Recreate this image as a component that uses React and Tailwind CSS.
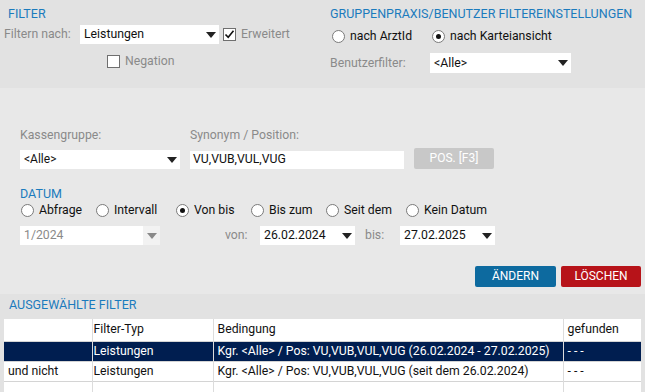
import React from 'react';

const Arrow = ({ muted }) => (
  <svg width="10" height="6" viewBox="0 0 10 6" className="shrink-0">
    <path d="M0 0 L10 0 L5 6 Z" fill={muted ? '#8a8a8a' : '#222'} />
  </svg>
);

function Select({ value, width, muted, className = '' }) {
  return (
    <div className={`flex items-center h-[19px] bg-white ${width} ${className}`}>
      <span className={`flex-1 pl-[4px] truncate ${muted ? 'text-[#8a8a8a]' : 'text-[#111]'}`}>{value}</span>
      <div className={`h-full w-[17px] flex items-center justify-center ${muted ? 'bg-[#f2f2f2]' : ''}`}>
        <Arrow muted={muted} />
      </div>
    </div>
  );
}

function Radio({ checked, label, className = '' }) {
  return (
    <label className={`flex items-center gap-[5px] ${className}`}>
      <span className="w-[13px] h-[13px] rounded-full border border-[#7a7a7a] bg-white flex items-center justify-center">
        {checked && <span className="w-[5px] h-[5px] rounded-full bg-[#111]" />}
      </span>
      <span className="text-[#111]">{label}</span>
    </label>
  );
}

function Checkbox({ checked, label, className = '' }) {
  return (
    <label className={`flex items-center gap-[5px] ${className}`}>
      <span className="w-[13px] h-[13px] border border-[#6f6f6f] bg-white flex items-center justify-center">
        {checked && (
          <svg width="11" height="11" viewBox="0 0 11 11">
            <path d="M1.5 5.5 L4.2 8.3 L9.5 1.8" fill="none" stroke="#111" strokeWidth="1.6" />
          </svg>
        )}
      </span>
      <span className="text-[#8a8a8a]">{label}</span>
    </label>
  );
}

const rows = [
  { neg: '', typ: 'Leistungen', bed: 'Kgr. <Alle> / Pos: VU,VUB,VUL,VUG (26.02.2024 - 27.02.2025)', gef: '- - -', sel: true },
  { neg: 'und nicht', typ: 'Leistungen', bed: 'Kgr. <Alle> / Pos: VU,VUB,VUL,VUG (seit dem 26.02.2024)', gef: '- - -' },
  { neg: '', typ: '', bed: '', gef: '' },
];

export default function App() {
  return (
    <div className="w-[645px] h-[392px] overflow-hidden bg-[#e2e2e2] text-[12.25px] leading-[15px]" style={{ fontFamily: 'Roboto, "Liberation Sans", sans-serif' }}>
      {/* Kopfbereich */}
      <div className="h-[88px] flex">
        <div className="w-[330px] pt-[6px]">
          <div className="pl-[8px] text-[#1b7bbd] h-[16px] text-[12.5px]">FILTER</div>
          <div className="flex items-center mt-[3px] pl-[4px]">
            <span className="w-[76px] text-[#8a8a8a]">Filtern nach:</span>
            <Select value="Leistungen" width="w-[139px]" />
            <Checkbox checked label="Erweitert" className="ml-[4px]" />
          </div>
          <Checkbox label="Negation" className="ml-[107px] mt-[10px]" />
        </div>
        <div className="flex-1 pt-[6px]">
          <div className="text-[#1b7bbd] h-[16px] text-[12.5px]">GRUPPENPRAXIS/BENUTZER FILTEREINSTELLUNGEN</div>
          <div className="flex items-center mt-[7px] pl-[2px]">
            <Radio label="nach ArztId" className="w-[100px]" />
            <Radio checked label="nach Karteiansicht" />
          </div>
          <div className="flex items-center mt-[9px]">
            <span className="w-[100px] text-[#8a8a8a]">Benutzerfilter:</span>
            <Select value="<Alle>" width="w-[141px]" className="h-[20px]" />
          </div>
        </div>
      </div>

      {/* Suchbereich */}
      <div className="h-[206px] bg-[#e8e8e8] pl-[20px] pt-[40px]">
        <div className="flex">
          <div className="w-[170px]">
            <div className="text-[#8a8a8a]">Kassengruppe:</div>
            <Select value="<Alle>" width="w-[160px]" className="mt-[7px] h-[18px] text-[12px]" />
          </div>
          <div>
            <div className="text-[#8a8a8a]">Synonym / Position:</div>
            <div className="flex items-center mt-[7px]">
              <div className="w-[214px] h-[18px] bg-white pl-[3px] flex items-center text-[#111]">VU,VUB,VUL,VUG</div>
              <button className="ml-[10px] w-[80px] h-[21px] -mt-[2px] rounded-[2px] bg-[#c8c8c8] text-white text-[12px]">POS. [F3]</button>
            </div>
          </div>
        </div>
        <div className="mt-[17px] text-[#1b7bbd] text-[12.5px]">DATUM</div>
        <div className="flex items-center mt-[2px] h-[14px] pl-[1px]">
          <Radio label="Abfrage" className="w-[75px]" />
          <Radio label="Intervall" className="w-[80px]" />
          <Radio checked label="Von bis" className="w-[75px]" />
          <Radio label="Bis zum" className="w-[75px]" />
          <Radio label="Seit dem" className="w-[80px]" />
          <Radio label="Kein Datum" />
        </div>
        <div className="flex items-center mt-[9px]">
          <Select value="1/2024" width="w-[140px]" muted className="h-[18px]" />
          <span className="ml-[65px] w-[35px] text-[#8a8a8a]">von:</span>
          <Select value="26.02.2024" width="w-[95px]" className="h-[18px]" />
          <span className="ml-[10px] w-[35px] text-[#8a8a8a]">bis:</span>
          <Select value="27.02.2025" width="w-[95px]" className="h-[18px]" />
        </div>
        <div className="flex justify-end gap-[5px] pr-[4px] mt-[21px]">
          <button className="w-[81px] h-[21px] rounded-[2px] bg-[#0d6a9f] text-white text-[12px]">ÄNDERN</button>
          <button className="w-[80px] h-[21px] rounded-[2px] bg-[#b71319] text-white text-[12px]">LÖSCHEN</button>
        </div>
      </div>

      {/* Ausgewählte Filter */}
      <div className="pt-[3px] pl-[4px]">
        <div className="pl-[5px] text-[#1b7bbd] h-[15px] text-[12.5px]">AUSGEWÄHLTE FILTER</div>
        <table className="mt-[7px] w-[637px] bg-white border-collapse table-fixed">
          <colgroup>
            <col className="w-[88px]" />
            <col className="w-[121px]" />
            <col className="w-[350px]" />
            <col className="w-[78px]" />
          </colgroup>
          <thead>
            <tr className="h-[22px] text-[#111]">
              <th className="font-normal text-left pl-[4px]"></th>
              <th className="font-normal text-left pl-[1px] border-l border-[#dcdcdc]">Filter-Typ</th>
              <th className="font-normal text-left pl-[4px] border-l border-[#dcdcdc]">Bedingung</th>
              <th className="font-normal text-left pl-[4px] border-l border-[#dcdcdc]">gefunden</th>
            </tr>
          </thead>
          <tbody>
            {rows.map((r, i) => (
              <tr key={i} className={`h-[20px] border-t border-[#d4d4d4] ${r.sel ? 'bg-[#001e50] text-white' : 'text-[#111]'}`}>
                <td className="pl-[4px] whitespace-nowrap">{r.neg}</td>
                <td className="pl-[1px] border-l border-[#dcdcdc] whitespace-nowrap">{r.typ}</td>
                <td className="pl-[4px] border-l border-[#dcdcdc] whitespace-nowrap overflow-hidden">{r.bed}</td>
                <td className="pl-[4px] border-l border-[#dcdcdc] whitespace-nowrap">{r.gef}</td>
              </tr>
            ))}
          </tbody>
        </table>
      </div>
    </div>
  );
}
